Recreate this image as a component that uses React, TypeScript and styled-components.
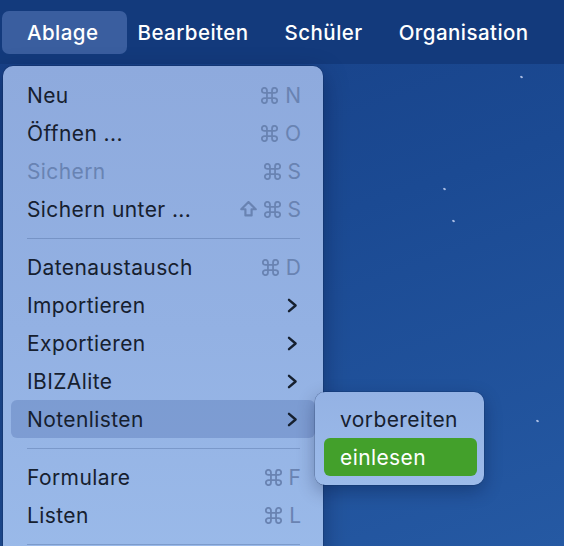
import React from "react";
import styled, { createGlobalStyle } from "styled-components";

const Global = createGlobalStyle`
  html, body { margin: 0; padding: 0; }
  body { width: 564px; height: 546px; overflow: hidden; font-family: Inter, "Noto Sans", sans-serif; }
`;

const Screen = styled.div`
  position: relative;
  width: 564px;
  height: 546px;
  overflow: hidden;
  background: linear-gradient(160deg, #173f85 0%, #1b4a93 45%, #2559a3 100%);
`;

const MenuBar = styled.div`
  display: flex;
  align-items: center;
  height: 64px;
  padding-left: 2px;
  background: #133a7c;
`;

const BarItem = styled.div<{ $active?: boolean }>`
  height: 43px;
  display: flex;
  align-items: center;
  padding: ${(p) => (p.$active ? "0 29px 0 25px" : "0 18px")};
  border-radius: 7px;
  background: ${(p) => (p.$active ? "#3a5e9f" : "transparent")};
  color: #ffffff;
  font-size: 20.5px;
  font-weight: 500;
  letter-spacing: 0.45px;
  &:nth-child(2) { padding-left: 10px; }
`;

const Star = styled.span`
  position: absolute;
  width: 3px;
  height: 2px;
  border-radius: 2px;
  background: rgba(220, 230, 255, 0.75);
  transform: rotate(35deg);
`;

const Panel = styled.div`
  position: absolute;
  left: 3px;
  top: 66px;
  width: 320px;
  padding: 10px 0 40px;
  border-radius: 10px;
  background: linear-gradient(180deg, #8eaadd 0%, #93b1e3 50%, #9bbbea 100%);
  box-shadow: 0 0 0 0.5px rgba(10, 30, 70, 0.45), 0 8px 24px rgba(0, 10, 40, 0.35);
`;

const Row = styled.div<{ $selected?: boolean; $disabled?: boolean }>`
  position: relative;
  height: 38px;
  margin: 0 8px;
  padding: 0 14px 0 16px;
  display: flex;
  align-items: center;
  justify-content: space-between;
  border-radius: 6px;
  background: ${(p) => (p.$selected ? "rgba(60, 95, 160, 0.28)" : "transparent")};
  color: ${(p) => (p.$disabled ? "#6883b3" : "#16202f")};
  font-size: 21px;
  letter-spacing: 0.4px;
`;

const Separator = styled.div`
  height: 20px;
  margin: 0 23px 0 24px;
  display: flex;
  align-items: center;
  &::after {
    content: "";
    flex: 1;
    height: 1px;
    background: rgba(50, 80, 130, 0.28);
  }
`;

const Shortcut = styled.span`
  display: flex;
  align-items: center;
  gap: 7px;
  color: #6983b2;
  font-size: 21px;
  letter-spacing: 0;
`;

const KeyIcon = styled.svg<{ $w: number; $h: number }>`
  width: ${(p) => p.$w}px;
  height: ${(p) => p.$h}px;
  fill: none;
  stroke: #6983b2;
  stroke-width: 2.1;
  stroke-linecap: round;
  stroke-linejoin: round;
`;

const Chevron = styled.svg`
  width: 11px;
  height: 15px;
  margin-right: 3px;
`;

const SubPanel = styled.div`
  position: absolute;
  left: 304px;
  top: -8px;
  width: 169px;
  padding: 8px 7px 9px 9px;
  box-sizing: border-box;
  border-radius: 10px;
  background: linear-gradient(180deg, #94b2e4 0%, #9cbbea 100%);
  box-shadow: 0 0 0 0.5px rgba(10, 30, 70, 0.35), 0 6px 18px rgba(0, 10, 40, 0.3);
  z-index: 2;
  letter-spacing: 0.4px;
`;

const SubItem = styled.div<{ $active?: boolean }>`
  height: 38px;
  display: flex;
  align-items: center;
  padding-left: 16px;
  border-radius: 6px;
  font-size: 21px;
  color: ${(p) => (p.$active ? "#ffffff" : "#16202f")};
  background: ${(p) => (p.$active ? "#43a02b" : "transparent")};
`;

const Arrow = () => (
  <Chevron viewBox="0 0 11 15">
    <path d="M2 1.8 L8.6 7.5 L2 13.2" fill="none" stroke="#16202f" strokeWidth="2.4" strokeLinecap="round" strokeLinejoin="round" />
  </Chevron>
);

const CommandIcon = () => (
  <KeyIcon $w={17} $h={17} viewBox="2 2 20 20">
    <path d="M15 6v12a3 3 0 1 0 3-3H6a3 3 0 1 0 3 3V6a3 3 0 1 0-3 3h12a3 3 0 1 0-3-3" />
  </KeyIcon>
);

const ShiftIcon = () => (
  <KeyIcon $w={17} $h={16} viewBox="4 4 16 15.5">
    <path d="M9 18v-6H5l7-7 7 7h-4v6H9z" />
  </KeyIcon>
);

type Item =
  | { kind: "sep" }
  | { kind: "item"; label: string; key?: string; shift?: boolean; sub?: boolean; disabled?: boolean; selected?: boolean };

const items: Item[] = [
  { kind: "item", label: "Neu", key: "N" },
  { kind: "item", label: "Öffnen ...", key: "O" },
  { kind: "item", label: "Sichern", key: "S", disabled: true },
  { kind: "item", label: "Sichern unter ...", key: "S", shift: true },
  { kind: "sep" },
  { kind: "item", label: "Datenaustausch", key: "D" },
  { kind: "item", label: "Importieren", sub: true },
  { kind: "item", label: "Exportieren", sub: true },
  { kind: "item", label: "IBIZAlite", sub: true },
  { kind: "item", label: "Notenlisten", sub: true, selected: true },
  { kind: "sep" },
  { kind: "item", label: "Formulare", key: "F" },
  { kind: "item", label: "Listen", key: "L" },
  { kind: "sep" },
];

const stars = [
  [520, 76],
  [443, 188],
  [452, 220],
  [536, 420],
];

export default function App() {
  return (
    <Screen>
      <Global />
      <MenuBar>
        <BarItem $active>Ablage</BarItem>
        <BarItem>Bearbeiten</BarItem>
        <BarItem>Schüler</BarItem>
        <BarItem>Organisation</BarItem>
      </MenuBar>
      {stars.map(([x, y], i) => (
        <Star key={i} style={{ left: x, top: y }} />
      ))}
      <Panel>
        {items.map((it, i) =>
          it.kind === "sep" ? (
            <Separator key={i} />
          ) : (
            <Row key={i} $selected={it.selected} $disabled={it.disabled}>
              <span>{it.label}</span>
              {it.sub ? (
                <Arrow />
              ) : (
                <Shortcut>
                  {it.shift && <ShiftIcon />}
                  <CommandIcon />
                  <span>{it.key}</span>
                </Shortcut>
              )}
              {it.selected && (
                <SubPanel>
                  <SubItem>vorbereiten</SubItem>
                  <SubItem $active>einlesen</SubItem>
                </SubPanel>
              )}
            </Row>
          )
        )}
      </Panel>
    </Screen>
  );
}
